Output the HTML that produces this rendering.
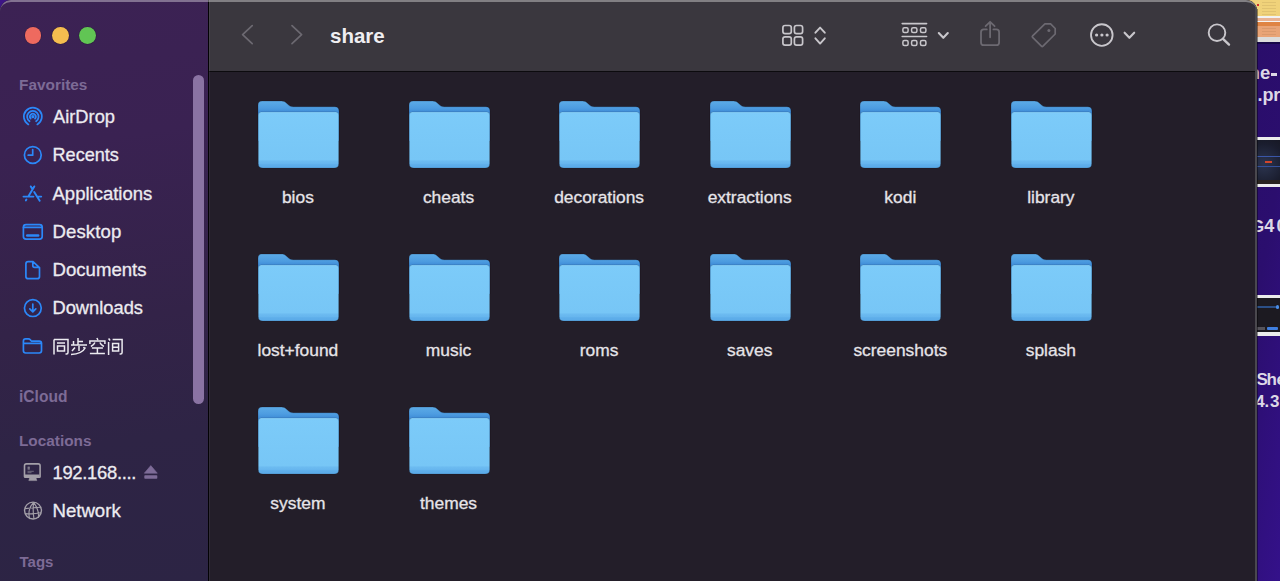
<!DOCTYPE html>
<html><head><meta charset="utf-8">
<style>
*{margin:0;padding:0;box-sizing:border-box}
html,body{width:1280px;height:581px;overflow:hidden;background:#2c0e70;font-family:"Liberation Sans",sans-serif}
.abs{position:absolute;white-space:nowrap}
#bgright{left:1200px;top:0;width:80px;height:581px;background:linear-gradient(100deg,#280c66 0%,#2b0e6e 60%,#34118a 100%)}
#win{left:0;top:0;width:1257px;height:581px;border-radius:11px 11px 0 0;overflow:hidden;background:#231e29}
#side{left:0;top:0;width:208px;height:581px;background:linear-gradient(172deg,#3c2254 0%,#3a2252 25%,#332348 55%,#2e2445 75%,#2c2444 100%)}
#vline{left:207.6px;top:0;width:1.6px;height:581px;background:#030205}
#tool{left:209px;top:0;width:1048px;height:71px;background:#3a373e}
#hline{left:209px;top:71px;width:1048px;height:1px;background:#0c0b0e}
#redge{left:1255px;top:0;width:2px;height:581px;background:#4a484e}
.sh{color:#7d6b96;font-weight:bold}
.si{color:#ecebf0;-webkit-text-stroke:0.3px #ecebf0}
.lbl{color:#e6e4e8;-webkit-text-stroke:0.3px #e6e4e8}
.ttl{color:#efeef1;font-weight:bold}
.bgt{color:#dcd8e6;font-weight:bold}
</style></head><body>
<div id="bgright" class="abs"></div>
<div class="abs" style="left:0;top:0;width:14px;height:14px;background:#3d1585"></div>
<div class="abs" style="left:1230px;top:0;width:50px;height:42px;background:#f0d27a"></div>
<div class="abs" style="left:1230px;top:15.5px;width:50px;height:2px;background:#f2f2f2"></div>
<div class="abs" style="left:1230px;top:17.5px;width:50px;height:3.5px;background:#e9b293"></div>
<div class="abs" style="left:1230px;top:21px;width:50px;height:1px;background:#f5f5f5"></div>
<div class="abs" style="left:1230px;top:22px;width:50px;height:4px;background:#df8444"></div>
<div class="abs" style="left:1230px;top:26px;width:50px;height:11px;background:#e9a477"></div>
<div class="abs" style="left:1230px;top:37px;width:50px;height:5px;background:#dcdcdc"></div>
<div class="abs" style="left:1230px;top:42px;width:50px;height:2px;background:#170848"></div>
<div class="abs" style="left:1262px;top:2px;width:14px;height:1px;background:rgba(90,60,30,0.1)"></div>
<div class="abs" style="left:1262px;top:5px;width:14px;height:1px;background:rgba(90,60,30,0.1)"></div>
<div class="abs" style="left:1262px;top:8px;width:14px;height:1px;background:rgba(90,60,30,0.1)"></div>
<div class="abs" style="left:1262px;top:11px;width:14px;height:1px;background:rgba(90,60,30,0.1)"></div>
<div class="abs" style="left:1262px;top:14px;width:14px;height:1px;background:rgba(90,60,30,0.1)"></div>
<div class="abs" style="left:1262px;top:28px;width:14px;height:1px;background:rgba(90,60,30,0.1)"></div>
<div class="abs" style="left:1262px;top:31px;width:14px;height:1px;background:rgba(90,60,30,0.1)"></div>
<div class="abs" style="left:1262px;top:34px;width:14px;height:1px;background:rgba(90,60,30,0.1)"></div>
<div class="abs" style="left:1257px;top:4px;width:2px;height:2px;background:#d03030"></div>
<div class="abs" style="left:1240px;top:136.7px;width:40px;height:50.5px;background:#ececec"></div>
<div class="abs" style="left:1240px;top:140.1px;width:40px;height:43.7px;background:radial-gradient(ellipse at 60% 55%,#2c3550 0%,#1a1d2e 60%,#15161f 100%)"></div>
<div class="abs" style="left:1240px;top:156px;width:40px;height:1px;background:#3a56a8"></div>
<div class="abs" style="left:1240px;top:166px;width:40px;height:1px;background:#34509a"></div>
<div class="abs" style="left:1265px;top:161px;width:7px;height:2px;background:#d2452c"></div>
<div class="abs" style="left:1240px;top:180px;width:40px;height:3.8px;background:#2a2420"></div>
<div class="abs" style="left:1240px;top:294.5px;width:40px;height:41px;background:#ebebeb"></div>
<div class="abs" style="left:1240px;top:297.7px;width:40px;height:33.9px;background:#1c1a21"></div>
<div class="abs" style="left:1240px;top:306px;width:38px;height:2px;background:#2b4f86"></div>
<div class="abs" style="left:1275.5px;top:305px;width:3px;height:4px;border-radius:2px;background:#4a8ee8"></div>
<div class="abs" style="left:1257px;top:327px;width:8px;height:2.5px;background:#55535a"></div>
<div class="abs" style="left:1267px;top:326.5px;width:11px;height:3.5px;border-radius:1px;background:#3f7fe0"></div>
<div class="abs bgt" style="left:1248.60px;top:64.34px;font-size:18.5px;line-height:18.5px;">n</div>
<div class="abs bgt" style="left:1259.90px;top:64.34px;font-size:18.5px;line-height:18.5px;">e</div>
<div class="abs bgt" style="left:1257.40px;top:85.76px;font-size:18px;line-height:18px;">.</div>
<div class="abs bgt" style="left:1262.40px;top:85.76px;font-size:18px;line-height:18px;">p</div>
<div class="abs bgt" style="left:1273.20px;top:85.76px;font-size:18px;line-height:18px;">r</div>
<div class="abs bgt" style="left:1251.00px;top:218.11px;font-size:17px;line-height:17px;">G</div>
<div class="abs bgt" style="left:1264.20px;top:217.26px;font-size:18px;line-height:18px;">4</div>
<div class="abs bgt" style="left:1276.60px;top:217.26px;font-size:18px;line-height:18px;">0</div>
<div class="abs bgt" style="left:1256.50px;top:371.11px;font-size:17px;line-height:17px;">S</div>
<div class="abs bgt" style="left:1266.40px;top:371.11px;font-size:17px;line-height:17px;">h</div>
<div class="abs bgt" style="left:1276.60px;top:371.11px;font-size:17px;line-height:17px;">e</div>
<div class="abs bgt" style="left:1255.60px;top:393.33px;font-size:16.5px;line-height:16.5px;">4</div>
<div class="abs bgt" style="left:1264.40px;top:393.33px;font-size:16.5px;line-height:16.5px;">.</div>
<div class="abs bgt" style="left:1269.90px;top:392.91px;font-size:17px;line-height:17px;">3</div>
<div class="abs" style="left:1270.8px;top:73.4px;width:6.5px;height:2.4px;background:#dcd8e6"></div>
<div class="abs" style="left:1257px;top:9px;width:1px;height:572px;background:rgba(0,0,0,0.4)"></div>
<div id="win" class="abs">
<div id="side" class="abs"></div>
<div id="vline" class="abs"></div>
<div id="tool" class="abs"></div>
<div id="hline" class="abs"></div>
<div class="abs" style="left:24.5px;top:27.2px;width:16.8px;height:16.8px;border-radius:50%;background:#ee6a5f;box-shadow:0 0 0 0.6px rgba(0,0,0,0.22)"></div>
<div class="abs" style="left:52.0px;top:27.2px;width:16.8px;height:16.8px;border-radius:50%;background:#f5bd4f;box-shadow:0 0 0 0.6px rgba(0,0,0,0.22)"></div>
<div class="abs" style="left:79.4px;top:27.2px;width:16.8px;height:16.8px;border-radius:50%;background:#61c554;box-shadow:0 0 0 0.6px rgba(0,0,0,0.22)"></div>
<div class="abs" style="left:193px;top:75px;width:11px;height:328.5px;border-radius:5.5px;background:#8a73a3"></div>
<div class="abs sh" style="left:19.00px;top:77.06px;font-size:15.4px;line-height:15.4px;">Favorites</div>
<div class="abs sh" style="left:19.00px;top:388.79px;font-size:15.6px;line-height:15.6px;">iCloud</div>
<div class="abs sh" style="left:19.00px;top:432.81px;font-size:15.35px;line-height:15.35px;">Locations</div>
<div class="abs sh" style="left:19.50px;top:553.70px;font-size:15px;line-height:15px;">Tags</div>
<div class="abs si" style="left:53.00px;top:107.61px;font-size:18.3px;line-height:18.3px;letter-spacing:0px">AirDrop</div>
<div class="abs si" style="left:52.50px;top:146.38px;font-size:18.1px;line-height:18.1px;letter-spacing:0px">Recents</div>
<div class="abs si" style="left:52.50px;top:184.94px;font-size:18.5px;line-height:18.5px;letter-spacing:0px">Applications</div>
<div class="abs si" style="left:52.50px;top:223.16px;font-size:18.6px;line-height:18.6px;letter-spacing:0.1px">Desktop</div>
<div class="abs si" style="left:52.50px;top:260.76px;font-size:18.6px;line-height:18.6px;letter-spacing:0px">Documents</div>
<div class="abs si" style="left:52.50px;top:299.21px;font-size:18.3px;line-height:18.3px;letter-spacing:0px">Downloads</div>
<div class="abs si" style="left:52.50px;top:463.92px;font-size:18.4px;line-height:18.4px;letter-spacing:-0.3px">192.168....</div>
<div class="abs si" style="left:52.50px;top:501.86px;font-size:18.6px;line-height:18.6px;letter-spacing:0px">Network</div>
<svg class="abs" style="left:50px;top:334px;" width="80" height="24" viewBox="50 334 80 24"><g stroke="#ecebf0" stroke-width="1.5" fill="none" stroke-linecap="butt">
<path d="M54 339.5 V354.5 M54 339.5 H68 V352.5 Q68 354 66.5 354 H65.5 M57 343 H65 M57.5 346 H64.5 V351 H57.5 Z"/>
<path transform="translate(-2,0)" d="M80 338 V345 M80 341.5 H85 M75.5 341 V345 M73 345 H89 M81 346 V351 M77 347.5 L74 351 M85.5 347 L87 349 M87.5 347.5 Q84 354 73 354.5"/>
<path transform="translate(-2.1,0)" d="M99 338 L100 340 M92 344 V341 H107 V344 M97 342.5 Q96 345 93 346.5 M102 342.5 Q103 345 106 346.5 M94 348 H105 M99.5 348 V353 M92 353.5 H107"/>
<path transform="translate(-2.4,0)" d="M111 338.5 L112.5 340.5 M111 342 V355 M115 339.5 H124.5 V352.5 Q124.5 354 123 354 H122 M115 343.5 V351 H121 V343.5 Z M115 347.2 H121"/>
</g></svg>
<svg class="abs" style="left:18px;top:100px;" width="30" height="260" viewBox="18 100 30 260"><g fill="none" stroke="#2b88f9" stroke-width="1.7" stroke-linecap="round" stroke-linejoin="round">
<path d="M28.35 124.44 A9.0 9.0 0 1 1 37.35 124.44 M29.58 121.32 A5.7 5.7 0 1 1 36.12 121.32 M30.69 118.59 A2.9 2.9 0 1 1 35.01 118.59" stroke-width="1.75"/>
<circle cx="32.8" cy="154.95" r="8.4"/>
<path d="M32.7 149.6 V155.2 H28.2"/>
<path d="M34.3 186.4 L28.6 195.9 M30.8 186.4 L31.9 188.3 M34.2 192.0 L39.7 200.7 M23.5 196.6 H33.4 M36.9 196.6 H41.2 M26.4 199.5 L25.9 200.4" stroke-width="1.95"/>
<rect x="23.4" y="224.6" width="18.8" height="14.6" rx="2.6"/>
<path d="M23.6 227.4 H42"/>
<path d="M27.2 235.5 H38.2" stroke-width="2.4"/>
<path d="M33.0 261.7 H28.2 Q25.9 261.7 25.9 264 V276.4 Q25.9 278.7 28.2 278.7 H37.2 Q39.5 278.7 39.5 276.4 V267.6 Z M32.8 262 V265.6 Q32.8 267.4 34.6 267.4 H39.2"/>
<circle cx="32.85" cy="308.1" r="8.4"/>
<path d="M32.8 304 V311.6 M29.8 308.8 L32.8 311.8 L35.8 308.8"/>
<path d="M23.4 343.4 H41.6 M25.6 338.9 H28.4 Q29.5 338.9 30.3 339.8 L31 340.6 Q31.6 341.2 32.5 341.2 H39.2 Q41.5 341.2 41.5 343.5 V350.8 Q41.5 353 39.2 353 H25.7 Q23.4 353 23.4 350.8 V341.2 Q23.4 338.9 25.6 338.9 Z"/>
</g>
<circle cx="32.85" cy="116.65" r="1.55" fill="#2b88f9"/>
</svg>
<svg class="abs" style="left:18px;top:455px;" width="145" height="70" viewBox="18 455 145 70"><g fill="none" stroke="#a39fa8" stroke-width="1.6" stroke-linejoin="round">
<path d="M26.4 463.9 H38.2 Q40.1 463.9 40.1 465.8 V476.5 Q40.1 477.3 39.3 477.3 H25.3 Q24.5 477.3 24.5 476.5 V465.8 Q24.5 463.9 26.4 463.9 Z"/>
<path d="M25 475.8 H39.6" stroke-width="2.6"/>
<path d="M29.6 477.8 H36.0 L36.8 480.6 H28.8 Z" fill="#a39fa8" stroke-width="0.5"/>
<circle cx="33" cy="510.6" r="8.45" stroke-width="1.4"/>
<path stroke-width="1.15" d="M25 508.6 Q33 507.6 41.2 507.2 M25.2 513.6 Q33 514.4 41 512.8 M33.6 502.4 Q27.2 509 29.6 519 M33.6 502.4 Q32.6 511 34 519.2 M33.6 502.4 Q39.4 510 38.4 518"/>
</g>
<path d="M27.6 467.3 H29.8 M27.6 468.9 H29.8 M28.2 466.6 V469.6 M29.2 466.6 V469.6 M27.5 471.3 H33.8 M27.5 472.7 H31.5" stroke="#a39fa8" stroke-width="0.7" fill="none" opacity="0.8"/>
<path d="M150.8 465.6 L157.3 473.2 H144.3 Z" fill="#7e6c98" stroke="#7e6c98" stroke-width="0.6" stroke-linejoin="round"/>
<rect x="144.3" y="475.2" width="13" height="3.5" rx="0.8" fill="#7e6c98"/>
</svg>
<div class="abs ttl" style="left:330.00px;top:25.75px;font-size:20.5px;line-height:20.5px;">share</div>
<svg class="abs" style="left:230px;top:15px;" width="1010" height="40" viewBox="230 15 1010 40"><g fill="none" stroke-linecap="round" stroke-linejoin="round">
<path d="M252.2 25.6 L242.6 34.6 L252.2 43.6" stroke="#6c6971" stroke-width="1.7"/>
<path d="M292 25.6 L301.6 34.6 L292 43.6" stroke="#6c6971" stroke-width="1.7"/>
<g stroke="#c8c6cb" stroke-width="1.7">
<rect x="782.9" y="25.5" width="8.4" height="8.2" rx="2.2"/>
<rect x="794.4" y="25.5" width="8.2" height="8.2" rx="2.2"/>
<rect x="782.9" y="36.8" width="8.4" height="8.3" rx="2.2"/>
<rect x="794.4" y="36.8" width="8.2" height="8.3" rx="2.2"/>
<path d="M815.4 32.7 L820.1 27.6 L824.8 32.7 M815.4 38.3 L820.1 43.6 L824.8 38.3" stroke-width="1.9"/>
<path d="M902.2 23.6 H926.6 M902.2 36.5 H926.6" stroke-width="1.6"/>
<rect x="902.9" y="27.8" width="5.2" height="4.8" rx="1.5" stroke-width="1.5"/>
<rect x="911.6" y="27.8" width="5.3" height="4.8" rx="1.5" stroke-width="1.5"/>
<rect x="920.5" y="27.8" width="5.4" height="4.8" rx="1.5" stroke-width="1.5"/>
<rect x="902.9" y="40.4" width="5.2" height="5.0" rx="1.5" stroke-width="1.5"/>
<rect x="911.6" y="40.4" width="5.3" height="5.0" rx="1.5" stroke-width="1.5"/>
<rect x="920.5" y="40.4" width="5.4" height="5.0" rx="1.5" stroke-width="1.5"/>
<path d="M938.8 33.1 L943.3 37.8 L947.8 33.1" stroke-width="2.1"/>
<circle cx="1101.8" cy="35" r="10.8" stroke-width="1.85"/>
<path d="M1124.6 32.7 L1129.4 37.8 L1134.2 32.7" stroke-width="2.1"/>
<circle cx="1217" cy="32.7" r="8.3" stroke-width="1.9"/>
<path d="M1223 38.8 L1229 44.6" stroke-width="2.4"/>
</g>
<g stroke="#6c6971" stroke-width="1.8">
<path d="M986.8 29.4 H983.8 Q981 29.4 981 32.2 V42.4 Q981 45.2 983.8 45.2 H996.3 Q999.1 45.2 999.1 42.4 V32.2 Q999.1 29.4 996.3 29.4 H993.4"/>
<path d="M990.1 22.2 V37.3 M985.6 26.2 L990.1 21.8 L994.6 26.2"/>
<path d="M1044.9 23.9 H1050.6 L1055.2 28.5 V34 L1043 46.2 Q1042.2 47 1041.4 46.2 L1032.6 37.4 Q1031.8 36.6 1032.6 35.8 Z" stroke-width="1.7"/>
</g>
</g>
<circle cx="1048.9" cy="30.5" r="1.5" fill="#6c6971"/>
<circle cx="1096.6" cy="35" r="1.6" fill="#c8c6cb"/>
<circle cx="1101.9" cy="35" r="1.6" fill="#c8c6cb"/>
<circle cx="1107.1" cy="35" r="1.6" fill="#c8c6cb"/>
</svg>
<svg width="0" height="0" class="abs"><defs><linearGradient id="fg" x1="0" y1="11" x2="0" y2="67" gradientUnits="userSpaceOnUse"><stop offset="0" stop-color="#7ccbf9"/><stop offset="0.86" stop-color="#77c6f6"/><stop offset="0.87" stop-color="#6dbcf1"/><stop offset="0.93" stop-color="#66b5ee"/><stop offset="0.94" stop-color="#5eaeea"/><stop offset="1" stop-color="#5aaae8"/></linearGradient><linearGradient id="bk" x1="0" y1="0" x2="0" y2="12" gradientUnits="userSpaceOnUse"><stop offset="0" stop-color="#5cabe7"/><stop offset="0.6" stop-color="#4d9ce0"/><stop offset="1" stop-color="#3b88d5"/></linearGradient></defs></svg>
<svg class="abs" style="left:257.0px;top:99.8px" width="83" height="70" viewBox="-1 -1 83 70">
<path d="M0 4.2 C0 1.4 1.4 0 4.2 0 L23.3 0 C25.8 0 27 0.7 28.6 2.2 L30.6 4.1 C32 5.4 33.1 5.7 35.2 5.7 L76.6 5.7 C79.5 5.7 81 7.2 81 10.1 V40 H0 Z" fill="url(#bk)" stroke="rgba(10,5,15,0.35)" stroke-width="0.6"/>
<path d="M0.3 14 Q0.3 11 3.3 11 H77.7 Q80.7 11 80.7 14 V62.4 Q80.7 67 76.1 67 H4.9 Q0.3 67 0.3 62.4 Z" fill="url(#fg)" stroke="rgba(10,5,15,0.3)" stroke-width="0.5"/>
<rect x="2.5" y="11.3" width="76" height="0.9" fill="#8fd5fb" opacity="0.55"/>
</svg>
<div class="abs lbl" style="left:222.90px;top:189.27px;width:150px;text-align:center;font-size:17.4px;line-height:17.4px;">bios</div>
<svg class="abs" style="left:407.6px;top:99.8px" width="83" height="70" viewBox="-1 -1 83 70">
<path d="M0 4.2 C0 1.4 1.4 0 4.2 0 L23.3 0 C25.8 0 27 0.7 28.6 2.2 L30.6 4.1 C32 5.4 33.1 5.7 35.2 5.7 L76.6 5.7 C79.5 5.7 81 7.2 81 10.1 V40 H0 Z" fill="url(#bk)" stroke="rgba(10,5,15,0.35)" stroke-width="0.6"/>
<path d="M0.3 14 Q0.3 11 3.3 11 H77.7 Q80.7 11 80.7 14 V62.4 Q80.7 67 76.1 67 H4.9 Q0.3 67 0.3 62.4 Z" fill="url(#fg)" stroke="rgba(10,5,15,0.3)" stroke-width="0.5"/>
<rect x="2.5" y="11.3" width="76" height="0.9" fill="#8fd5fb" opacity="0.55"/>
</svg>
<div class="abs lbl" style="left:373.50px;top:189.27px;width:150px;text-align:center;font-size:17.4px;line-height:17.4px;">cheats</div>
<svg class="abs" style="left:558.2px;top:99.8px" width="83" height="70" viewBox="-1 -1 83 70">
<path d="M0 4.2 C0 1.4 1.4 0 4.2 0 L23.3 0 C25.8 0 27 0.7 28.6 2.2 L30.6 4.1 C32 5.4 33.1 5.7 35.2 5.7 L76.6 5.7 C79.5 5.7 81 7.2 81 10.1 V40 H0 Z" fill="url(#bk)" stroke="rgba(10,5,15,0.35)" stroke-width="0.6"/>
<path d="M0.3 14 Q0.3 11 3.3 11 H77.7 Q80.7 11 80.7 14 V62.4 Q80.7 67 76.1 67 H4.9 Q0.3 67 0.3 62.4 Z" fill="url(#fg)" stroke="rgba(10,5,15,0.3)" stroke-width="0.5"/>
<rect x="2.5" y="11.3" width="76" height="0.9" fill="#8fd5fb" opacity="0.55"/>
</svg>
<div class="abs lbl" style="left:524.10px;top:189.27px;width:150px;text-align:center;font-size:17.4px;line-height:17.4px;">decorations</div>
<svg class="abs" style="left:708.8px;top:99.8px" width="83" height="70" viewBox="-1 -1 83 70">
<path d="M0 4.2 C0 1.4 1.4 0 4.2 0 L23.3 0 C25.8 0 27 0.7 28.6 2.2 L30.6 4.1 C32 5.4 33.1 5.7 35.2 5.7 L76.6 5.7 C79.5 5.7 81 7.2 81 10.1 V40 H0 Z" fill="url(#bk)" stroke="rgba(10,5,15,0.35)" stroke-width="0.6"/>
<path d="M0.3 14 Q0.3 11 3.3 11 H77.7 Q80.7 11 80.7 14 V62.4 Q80.7 67 76.1 67 H4.9 Q0.3 67 0.3 62.4 Z" fill="url(#fg)" stroke="rgba(10,5,15,0.3)" stroke-width="0.5"/>
<rect x="2.5" y="11.3" width="76" height="0.9" fill="#8fd5fb" opacity="0.55"/>
</svg>
<div class="abs lbl" style="left:674.70px;top:189.27px;width:150px;text-align:center;font-size:17.4px;line-height:17.4px;">extractions</div>
<svg class="abs" style="left:859.4px;top:99.8px" width="83" height="70" viewBox="-1 -1 83 70">
<path d="M0 4.2 C0 1.4 1.4 0 4.2 0 L23.3 0 C25.8 0 27 0.7 28.6 2.2 L30.6 4.1 C32 5.4 33.1 5.7 35.2 5.7 L76.6 5.7 C79.5 5.7 81 7.2 81 10.1 V40 H0 Z" fill="url(#bk)" stroke="rgba(10,5,15,0.35)" stroke-width="0.6"/>
<path d="M0.3 14 Q0.3 11 3.3 11 H77.7 Q80.7 11 80.7 14 V62.4 Q80.7 67 76.1 67 H4.9 Q0.3 67 0.3 62.4 Z" fill="url(#fg)" stroke="rgba(10,5,15,0.3)" stroke-width="0.5"/>
<rect x="2.5" y="11.3" width="76" height="0.9" fill="#8fd5fb" opacity="0.55"/>
</svg>
<div class="abs lbl" style="left:825.30px;top:189.27px;width:150px;text-align:center;font-size:17.4px;line-height:17.4px;">kodi</div>
<svg class="abs" style="left:1010.0px;top:99.8px" width="83" height="70" viewBox="-1 -1 83 70">
<path d="M0 4.2 C0 1.4 1.4 0 4.2 0 L23.3 0 C25.8 0 27 0.7 28.6 2.2 L30.6 4.1 C32 5.4 33.1 5.7 35.2 5.7 L76.6 5.7 C79.5 5.7 81 7.2 81 10.1 V40 H0 Z" fill="url(#bk)" stroke="rgba(10,5,15,0.35)" stroke-width="0.6"/>
<path d="M0.3 14 Q0.3 11 3.3 11 H77.7 Q80.7 11 80.7 14 V62.4 Q80.7 67 76.1 67 H4.9 Q0.3 67 0.3 62.4 Z" fill="url(#fg)" stroke="rgba(10,5,15,0.3)" stroke-width="0.5"/>
<rect x="2.5" y="11.3" width="76" height="0.9" fill="#8fd5fb" opacity="0.55"/>
</svg>
<div class="abs lbl" style="left:975.90px;top:189.27px;width:150px;text-align:center;font-size:17.4px;line-height:17.4px;">library</div>
<svg class="abs" style="left:257.0px;top:252.9px" width="83" height="70" viewBox="-1 -1 83 70">
<path d="M0 4.2 C0 1.4 1.4 0 4.2 0 L23.3 0 C25.8 0 27 0.7 28.6 2.2 L30.6 4.1 C32 5.4 33.1 5.7 35.2 5.7 L76.6 5.7 C79.5 5.7 81 7.2 81 10.1 V40 H0 Z" fill="url(#bk)" stroke="rgba(10,5,15,0.35)" stroke-width="0.6"/>
<path d="M0.3 14 Q0.3 11 3.3 11 H77.7 Q80.7 11 80.7 14 V62.4 Q80.7 67 76.1 67 H4.9 Q0.3 67 0.3 62.4 Z" fill="url(#fg)" stroke="rgba(10,5,15,0.3)" stroke-width="0.5"/>
<rect x="2.5" y="11.3" width="76" height="0.9" fill="#8fd5fb" opacity="0.55"/>
</svg>
<div class="abs lbl" style="left:222.90px;top:342.27px;width:150px;text-align:center;font-size:17.4px;line-height:17.4px;">lost+found</div>
<svg class="abs" style="left:407.6px;top:252.9px" width="83" height="70" viewBox="-1 -1 83 70">
<path d="M0 4.2 C0 1.4 1.4 0 4.2 0 L23.3 0 C25.8 0 27 0.7 28.6 2.2 L30.6 4.1 C32 5.4 33.1 5.7 35.2 5.7 L76.6 5.7 C79.5 5.7 81 7.2 81 10.1 V40 H0 Z" fill="url(#bk)" stroke="rgba(10,5,15,0.35)" stroke-width="0.6"/>
<path d="M0.3 14 Q0.3 11 3.3 11 H77.7 Q80.7 11 80.7 14 V62.4 Q80.7 67 76.1 67 H4.9 Q0.3 67 0.3 62.4 Z" fill="url(#fg)" stroke="rgba(10,5,15,0.3)" stroke-width="0.5"/>
<rect x="2.5" y="11.3" width="76" height="0.9" fill="#8fd5fb" opacity="0.55"/>
</svg>
<div class="abs lbl" style="left:373.50px;top:342.27px;width:150px;text-align:center;font-size:17.4px;line-height:17.4px;">music</div>
<svg class="abs" style="left:558.2px;top:252.9px" width="83" height="70" viewBox="-1 -1 83 70">
<path d="M0 4.2 C0 1.4 1.4 0 4.2 0 L23.3 0 C25.8 0 27 0.7 28.6 2.2 L30.6 4.1 C32 5.4 33.1 5.7 35.2 5.7 L76.6 5.7 C79.5 5.7 81 7.2 81 10.1 V40 H0 Z" fill="url(#bk)" stroke="rgba(10,5,15,0.35)" stroke-width="0.6"/>
<path d="M0.3 14 Q0.3 11 3.3 11 H77.7 Q80.7 11 80.7 14 V62.4 Q80.7 67 76.1 67 H4.9 Q0.3 67 0.3 62.4 Z" fill="url(#fg)" stroke="rgba(10,5,15,0.3)" stroke-width="0.5"/>
<rect x="2.5" y="11.3" width="76" height="0.9" fill="#8fd5fb" opacity="0.55"/>
</svg>
<div class="abs lbl" style="left:524.10px;top:342.27px;width:150px;text-align:center;font-size:17.4px;line-height:17.4px;">roms</div>
<svg class="abs" style="left:708.8px;top:252.9px" width="83" height="70" viewBox="-1 -1 83 70">
<path d="M0 4.2 C0 1.4 1.4 0 4.2 0 L23.3 0 C25.8 0 27 0.7 28.6 2.2 L30.6 4.1 C32 5.4 33.1 5.7 35.2 5.7 L76.6 5.7 C79.5 5.7 81 7.2 81 10.1 V40 H0 Z" fill="url(#bk)" stroke="rgba(10,5,15,0.35)" stroke-width="0.6"/>
<path d="M0.3 14 Q0.3 11 3.3 11 H77.7 Q80.7 11 80.7 14 V62.4 Q80.7 67 76.1 67 H4.9 Q0.3 67 0.3 62.4 Z" fill="url(#fg)" stroke="rgba(10,5,15,0.3)" stroke-width="0.5"/>
<rect x="2.5" y="11.3" width="76" height="0.9" fill="#8fd5fb" opacity="0.55"/>
</svg>
<div class="abs lbl" style="left:674.70px;top:342.27px;width:150px;text-align:center;font-size:17.4px;line-height:17.4px;">saves</div>
<svg class="abs" style="left:859.4px;top:252.9px" width="83" height="70" viewBox="-1 -1 83 70">
<path d="M0 4.2 C0 1.4 1.4 0 4.2 0 L23.3 0 C25.8 0 27 0.7 28.6 2.2 L30.6 4.1 C32 5.4 33.1 5.7 35.2 5.7 L76.6 5.7 C79.5 5.7 81 7.2 81 10.1 V40 H0 Z" fill="url(#bk)" stroke="rgba(10,5,15,0.35)" stroke-width="0.6"/>
<path d="M0.3 14 Q0.3 11 3.3 11 H77.7 Q80.7 11 80.7 14 V62.4 Q80.7 67 76.1 67 H4.9 Q0.3 67 0.3 62.4 Z" fill="url(#fg)" stroke="rgba(10,5,15,0.3)" stroke-width="0.5"/>
<rect x="2.5" y="11.3" width="76" height="0.9" fill="#8fd5fb" opacity="0.55"/>
</svg>
<div class="abs lbl" style="left:825.30px;top:342.27px;width:150px;text-align:center;font-size:17.4px;line-height:17.4px;">screenshots</div>
<svg class="abs" style="left:1010.0px;top:252.9px" width="83" height="70" viewBox="-1 -1 83 70">
<path d="M0 4.2 C0 1.4 1.4 0 4.2 0 L23.3 0 C25.8 0 27 0.7 28.6 2.2 L30.6 4.1 C32 5.4 33.1 5.7 35.2 5.7 L76.6 5.7 C79.5 5.7 81 7.2 81 10.1 V40 H0 Z" fill="url(#bk)" stroke="rgba(10,5,15,0.35)" stroke-width="0.6"/>
<path d="M0.3 14 Q0.3 11 3.3 11 H77.7 Q80.7 11 80.7 14 V62.4 Q80.7 67 76.1 67 H4.9 Q0.3 67 0.3 62.4 Z" fill="url(#fg)" stroke="rgba(10,5,15,0.3)" stroke-width="0.5"/>
<rect x="2.5" y="11.3" width="76" height="0.9" fill="#8fd5fb" opacity="0.55"/>
</svg>
<div class="abs lbl" style="left:975.90px;top:342.27px;width:150px;text-align:center;font-size:17.4px;line-height:17.4px;">splash</div>
<svg class="abs" style="left:257.0px;top:406.0px" width="83" height="70" viewBox="-1 -1 83 70">
<path d="M0 4.2 C0 1.4 1.4 0 4.2 0 L23.3 0 C25.8 0 27 0.7 28.6 2.2 L30.6 4.1 C32 5.4 33.1 5.7 35.2 5.7 L76.6 5.7 C79.5 5.7 81 7.2 81 10.1 V40 H0 Z" fill="url(#bk)" stroke="rgba(10,5,15,0.35)" stroke-width="0.6"/>
<path d="M0.3 14 Q0.3 11 3.3 11 H77.7 Q80.7 11 80.7 14 V62.4 Q80.7 67 76.1 67 H4.9 Q0.3 67 0.3 62.4 Z" fill="url(#fg)" stroke="rgba(10,5,15,0.3)" stroke-width="0.5"/>
<rect x="2.5" y="11.3" width="76" height="0.9" fill="#8fd5fb" opacity="0.55"/>
</svg>
<div class="abs lbl" style="left:222.90px;top:495.37px;width:150px;text-align:center;font-size:17.4px;line-height:17.4px;">system</div>
<svg class="abs" style="left:407.6px;top:406.0px" width="83" height="70" viewBox="-1 -1 83 70">
<path d="M0 4.2 C0 1.4 1.4 0 4.2 0 L23.3 0 C25.8 0 27 0.7 28.6 2.2 L30.6 4.1 C32 5.4 33.1 5.7 35.2 5.7 L76.6 5.7 C79.5 5.7 81 7.2 81 10.1 V40 H0 Z" fill="url(#bk)" stroke="rgba(10,5,15,0.35)" stroke-width="0.6"/>
<path d="M0.3 14 Q0.3 11 3.3 11 H77.7 Q80.7 11 80.7 14 V62.4 Q80.7 67 76.1 67 H4.9 Q0.3 67 0.3 62.4 Z" fill="url(#fg)" stroke="rgba(10,5,15,0.3)" stroke-width="0.5"/>
<rect x="2.5" y="11.3" width="76" height="0.9" fill="#8fd5fb" opacity="0.55"/>
</svg>
<div class="abs lbl" style="left:373.50px;top:495.37px;width:150px;text-align:center;font-size:17.4px;line-height:17.4px;">themes</div>
<div id="redge" class="abs"></div>
<div class="abs" style="left:209px;top:0;width:1px;height:581px;background:rgba(255,255,255,0.07)"></div>
<div class="abs" style="left:0;top:0;width:1257px;height:20px;border-top:2px solid rgba(255,255,255,0.36);border-radius:11px 11px 0 0"></div>
</div>
</body></html>
